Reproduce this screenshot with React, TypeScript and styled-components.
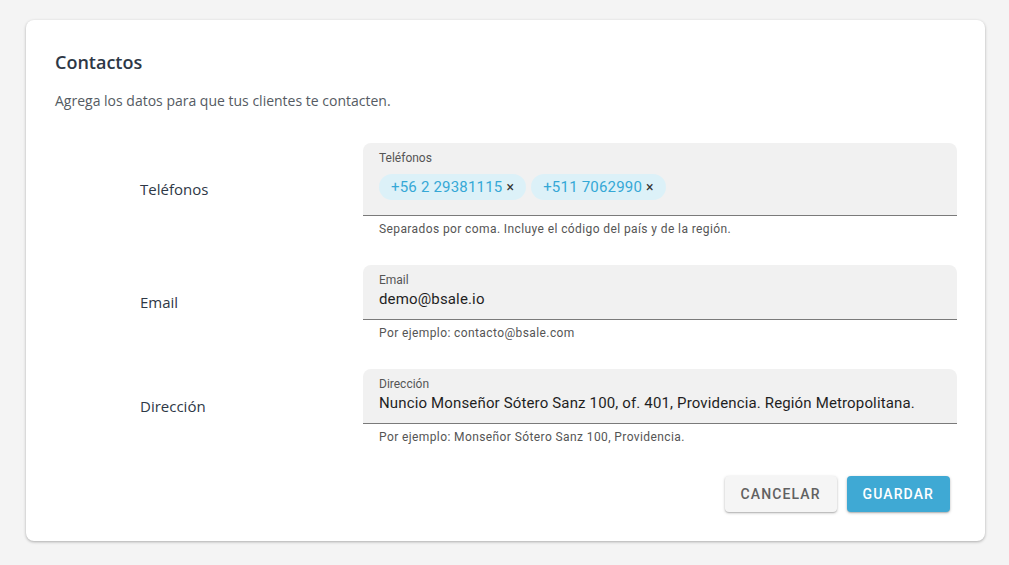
import React from 'react';
import styled, { createGlobalStyle } from 'styled-components';

const GlobalStyle = createGlobalStyle`
	html, body {
		margin: 0;
		padding: 0;
		background: #f4f4f4;
	}
	body {
		font-family: 'Open Sans', 'Liberation Sans', sans-serif;
	}
`

interface FieldRow {
	label: string
	fieldLabel: string
	value?: string
	chips?: string[]
	helper: string
}

const rows: FieldRow[] = [
	{
		label: 'Teléfonos',
		fieldLabel: 'Teléfonos',
		chips: ['+56 2 29381115', '+511 7062990'],
		helper: 'Separados por coma. Incluye el código del país y de la región.',
	},
	{
		label: 'Email',
		fieldLabel: 'Email',
		value: 'demo@bsale.io',
		helper: 'Por ejemplo: contacto@bsale.com',
	},
	{
		label: 'Dirección',
		fieldLabel: 'Dirección',
		value: 'Nuncio Monseñor Sótero Sanz 100, of. 401, Providencia. Región Metropolitana.',
		helper: 'Por ejemplo: Monseñor Sótero Sanz 100, Providencia.',
	},
]

export default function App() {
	return (
		<Page>
			<GlobalStyle />
			<Card>
				<Title>Contactos</Title>
				<Subtitle>Agrega los datos para que tus clientes te contacten.</Subtitle>

				<Rows>
					{rows.map((row) => (
						<Row key={row.label}>
							<RowLabel>{row.label}</RowLabel>
							<FieldGroup>
								<Field $tall={!!row.chips}>
									<FieldLabel>{row.fieldLabel}</FieldLabel>
									{row.chips ? (
										<Chips>
											{row.chips.map((chip) => (
												<Chip key={chip}>
													{chip}
													<ChipClose>×</ChipClose>
												</Chip>
											))}
										</Chips>
									) : (
										<FieldValue>{row.value}</FieldValue>
									)}
								</Field>
								<Helper>{row.helper}</Helper>
							</FieldGroup>
						</Row>
					))}
				</Rows>

				<Actions>
					<Button>Cancelar</Button>
					<Button $primary>Guardar</Button>
				</Actions>
			</Card>
		</Page>
	)
}

const Page = styled.div`
	padding: 20px 24px 24px 26px;
	box-sizing: border-box;
	width: 1009px;
	min-height: 565px;
`

const Card = styled.section`
	width: 959px;
	box-sizing: border-box;
	background: #ffffff;
	border-radius: 8px;
	box-shadow: 0 1px 3px rgba(0, 0, 0, 0.3);
	padding: 30px 28px 29px 29px;
	display: flex;
	flex-direction: column;
`

const Title = styled.h2`
	margin: 0;
	font-size: 18px;
	line-height: 24px;
	font-weight: 600;
	color: #2e3846;
`

const Subtitle = styled.p`
	margin: 17px 0 0;
	font-size: 14px;
	line-height: 20px;
	color: #555b63;
`

const Rows = styled.div`
	display: flex;
	flex-direction: column;
	gap: 29px;
	margin-top: 32px;
`

const Row = styled.div`
	display: grid;
	grid-template-columns: 308px 1fr;
	align-items: center;
`

const RowLabel = styled.span`
	padding-left: 85px;
	padding-bottom: 1px;
	font-size: 15px;
	color: #2e3846;
`

const FieldGroup = styled.div`
	display: flex;
	flex-direction: column;
`

const Field = styled.div<{ $tall: boolean }>`
	background: #f1f1f1;
	border-radius: 8px 8px 0 0;
	border-bottom: 1px solid #7a7a7a;
	padding: 9px 16px ${(p) => (p.$tall ? '15px' : '10px')};
	display: flex;
	flex-direction: column;
	font-family: Roboto, 'Liberation Sans', sans-serif;
`

const FieldLabel = styled.span`
	font-size: 12px;
	line-height: 12px;
	color: #555555;
`

const FieldValue = styled.span`
	margin-top: 3px;
	font-size: 15px;
	line-height: 20px;
	letter-spacing: 0.15px;
	color: #1f1f1f;
`

const Chips = styled.div`
	display: flex;
	gap: 5px;
	margin-top: 10px;
`

const Chip = styled.span`
	display: inline-flex;
	align-items: center;
	height: 26px;
	padding: 0 12px;
	border-radius: 13px;
	background: #dcf1f8;
	color: #35a8d6;
	font-size: 15px;
	letter-spacing: 0.2px;
`

const ChipClose = styled.span`
	margin-left: 4px;
	color: #333;
	font-size: 14px;
`

const Helper = styled.span`
	margin-top: 6px;
	padding-left: 16px;
	font-family: Roboto, 'Liberation Sans', sans-serif;
	font-size: 12px;
	line-height: 14px;
	letter-spacing: 0.4px;
	color: #555555;
`

const Actions = styled.div`
	display: flex;
	justify-content: flex-end;
	gap: 10px;
	margin-top: 32px;
	padding-right: 7px;
`

const Button = styled.button<{ $primary?: boolean }>`
	height: 36px;
	padding: 0 16px;
	border: none;
	border-radius: 4px;
	font-family: Roboto, 'Liberation Sans', sans-serif;
	font-size: 14px;
	font-weight: 500;
	letter-spacing: 1.1px;
	text-transform: uppercase;
	cursor: pointer;
	background: ${(p) => (p.$primary ? '#3fa9d4' : '#f5f5f5')};
	color: ${(p) => (p.$primary ? '#ffffff' : '#616161')};
	box-shadow: 0 1px 3px rgba(0, 0, 0, 0.25), 0 1px 1px rgba(0, 0, 0, 0.12);
`
